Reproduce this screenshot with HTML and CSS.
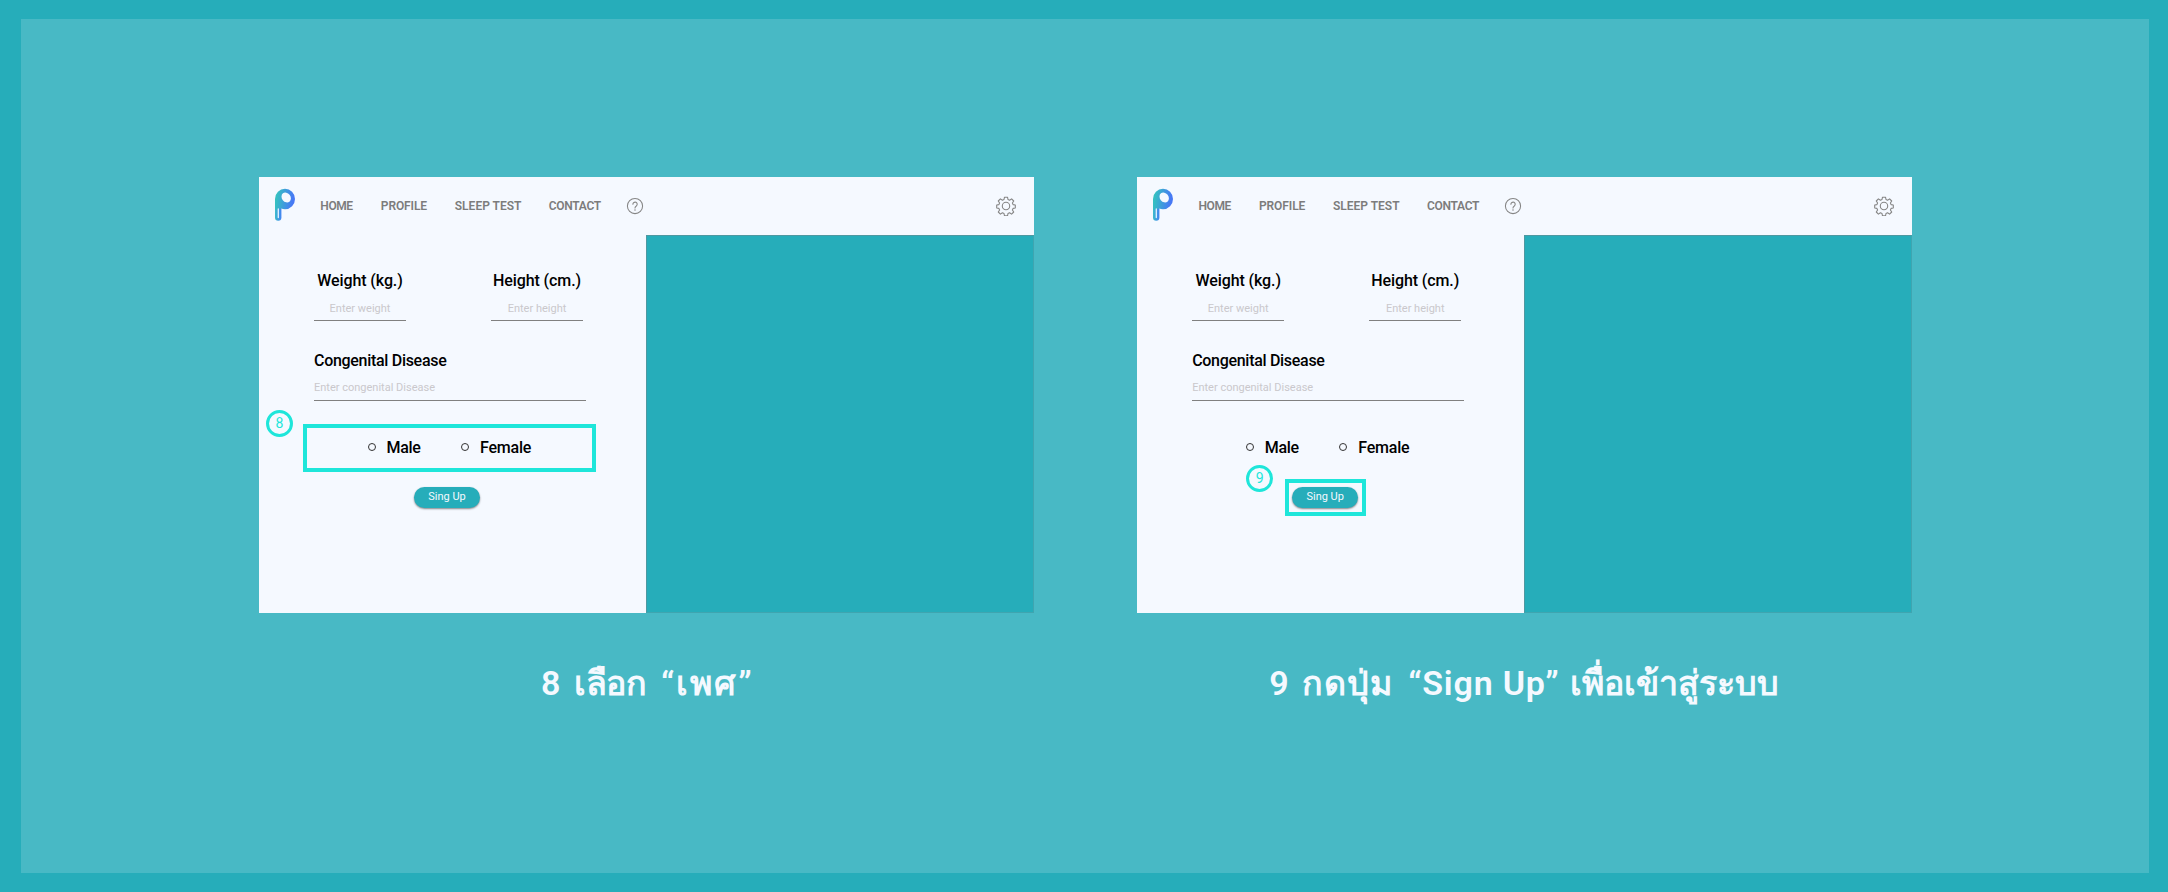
FILE: index.html
```html
<!DOCTYPE html>
<html lang="th">
<head>
<meta charset="utf-8">
<title>Sign up steps</title>
<link rel="stylesheet" href="styles.css">
</head>
<body>
<svg class="defs" width="0" height="0">
  <defs>
    <linearGradient id="brand" x1="0" y1="0.3" x2="1" y2="0.45">
      <stop offset="0.1" stop-color="#35bfc2"/><stop offset="0.9" stop-color="#4779f5"/>
    </linearGradient>
    <linearGradient id="stem" x1="0" y1="0" x2="1" y2="0">
      <stop offset="0" stop-color="#3bbccb"/><stop offset="1" stop-color="#4382f3"/>
    </linearGradient>
    <symbol id="logo" viewBox="0 0 22 34">
      <path d="M1 11.5V29.5a3.2 3.2 0 0 0 6.4 0V19.5" fill="url(#stem)"/>
      <path d="M1 11a10 10.300 0 1 1 10 10.300q-2.200 0-3.600-.8L1 22Z" fill="url(#brand)"/>
      <ellipse cx="12.200" cy="9.500" rx="4.300" ry="5.300" transform="rotate(-38 12.200 9.500)" fill="#f5f9ff"/>
      <path d="M4.300 21V29.500" stroke="#e4f3ff" stroke-width="1.300" stroke-linecap="round"/>
    </symbol>
    <symbol id="help" viewBox="0 0 18 18">
      <circle cx="9" cy="9" r="7.600" fill="none" stroke="#858585" stroke-width="1.050"/>
      <path d="M6.900 7.300a2.150 2.150 0 1 1 3.400 1.700C9.400 9.600 9 9.900 9 11" fill="none" stroke="#858585" stroke-width="1.100" stroke-linecap="round"/>
      <circle cx="9" cy="13" r=".75" fill="#858585"/>
    </symbol>
    <symbol id="gear" viewBox="0 0 20 20">
      <g fill="none" stroke="#858585" stroke-width="1.100" stroke-linejoin="round">
        <circle cx="10" cy="10" r="3.700"/>
        <path d="M8.500 1.200h3l.5 2.300 1.600.7 2-1.300 2.100 2.100-1.300 2 .7 1.600 2.200.4v3l-2.200.4-.7 1.600 1.300 2-2.100 2.100-2-1.300-1.600.7-.5 2.300h-3L8 17.500l-1.600-.7-2 1.300L2.300 16l1.300-2-.7-1.600L.7 12V9l2.200-.4.7-1.600-1.300-2 2.100-2.100 2 1.300L8 3.500Z"/>
      </g>
    </symbol>
  </defs>
</svg>
<main class="board">
  <figure class="step">
    <div class="screen">
      <header class="nav">
        <svg class="logo"><use href="#logo"/></svg>
        <nav class="links"><a class="home">HOME</a><a class="profile">PROFILE</a><a class="sleep">SLEEP TEST</a><a class="contact">CONTACT</a></nav>
        <svg class="help"><use href="#help"/></svg>
        <svg class="gear"><use href="#gear"/></svg>
      </header>
      <div class="body">
        <form class="form">
          <div class="pair">
            <div class="field center"><label class="weight">Weight (kg.)</label><span class="hint">Enter weight</span></div>
            <div class="field center"><label class="height">Height (cm.)</label><span class="hint">Enter height</span></div>
          </div>
          <div class="field wide"><label class="disease">Congenital Disease</label><span class="hint">Enter congenital Disease</span></div>
          <div class="sex"><i class="radio"></i><span class="male">Male</span><i class="radio"></i><span class="female">Female</span></div>
          <div class="submit">Sing Up</div>
        </form>
        <div class="cover"></div>
      </div>
      <div class="mark mark-sex"></div>
      <div class="badge badge-8">8</div>
    </div>
    <figcaption class="caption"><span class="num">8</span><span class="c-choose">เลือก</span><span class="c-sex">“เพศ”</span></figcaption>
  </figure>
  <figure class="step">
    <div class="screen">
      <header class="nav">
        <svg class="logo"><use href="#logo"/></svg>
        <nav class="links"><a class="home">HOME</a><a class="profile">PROFILE</a><a class="sleep">SLEEP TEST</a><a class="contact">CONTACT</a></nav>
        <svg class="help"><use href="#help"/></svg>
        <svg class="gear"><use href="#gear"/></svg>
      </header>
      <div class="body">
        <form class="form">
          <div class="pair">
            <div class="field center"><label class="weight">Weight (kg.)</label><span class="hint">Enter weight</span></div>
            <div class="field center"><label class="height">Height (cm.)</label><span class="hint">Enter height</span></div>
          </div>
          <div class="field wide"><label class="disease">Congenital Disease</label><span class="hint">Enter congenital Disease</span></div>
          <div class="sex"><i class="radio"></i><span class="male">Male</span><i class="radio"></i><span class="female">Female</span></div>
          <div class="submit">Sing Up</div>
        </form>
        <div class="cover"></div>
      </div>
      <div class="mark mark-submit"></div>
      <div class="badge badge-9">9</div>
    </div>
    <figcaption class="caption"><span class="num">9</span><span class="c-press">กดปุ่ม</span><span class="c-signup">“Sign Up”</span><span class="c-enter">เพื่อเข้าสู่ระบบ</span></figcaption>
  </figure>
</main>
</body>
</html>
```
FILE: styles.css
```css
* { box-sizing: border-box; }
body { margin: 0; height: 892px; padding: 19px 19px 19px 21px; background: #26adba; font-family: Roboto, "Noto Sans", sans-serif; overflow: hidden; }
.defs { position: absolute; }
.board { height: 854px; background: #48b9c5; display: flex; gap: 103.500px; padding: 158px 0 0 238px; }
.step { margin: 0; width: 774.700px; }
.screen { position: relative; height: 435.500px; background: #f5f9ff; display: flex; flex-direction: column; }
.nav { height: 58px; display: flex; align-items: center; padding: 0 18px 0 15px; flex: none; }
.logo { width: 22px; height: 34px; margin-top: -3px; }
.links { display: flex; margin-left: 24.300px; color: #7c7c7c; font-size: 12px; font-weight: 600; line-height: 16px; white-space: nowrap; }
.home { width: 60.500px; letter-spacing: -.4px; }
.profile { width: 74px; letter-spacing: -.1px; }
.sleep { width: 94px; letter-spacing: 0; }
.contact { width: 77.500px; letter-spacing: -.3px; }
.help { width: 18px; height: 18px; }
.gear { width: 20px; height: 20px; margin-left: auto; }
.body { display: flex; flex: 1; }
.form { width: 387px; padding: 36px 0 0 55px; white-space: nowrap; }
.cover { flex: 1; background: #26adba; border: 1px solid #4e98a1; border-right-color: #3fa5b0; border-bottom-color: #3fa5b0; }
.pair { display: flex; gap: 85px; }
.field { display: flex; flex-direction: column; width: 92px; border-bottom: 1px solid #808080; padding-bottom: 3px; }
.center { align-items: center; }
.wide { width: 272px; margin-top: 30px; padding-bottom: 3px; }
label { font-size: 16px; line-height: 20px; font-weight: 500; color: #000; }
.weight, .height { letter-spacing: -.1px; }
.disease { letter-spacing: -.3px; }
.hint { margin-top: 10px; font-size: 11px; line-height: 16px; color: #cac8cc; }
.wide .hint { margin-top: 9px; padding-bottom: 1px; }
.sex { display: flex; align-items: center; margin-top: 36px; height: 20px; font-size: 16px; font-weight: 500; padding-left: 53.500px; }
.radio { width: 8px; height: 8px; border: 1px solid #333; border-radius: 50%; }
.male { width: 74.500px; margin-left: 11px; letter-spacing: -.3px; }
.female { margin-left: 11px; letter-spacing: -.2px; }
.submit { margin: 30px 0 0 100px; width: 66px; height: 21px; border-radius: 11px; background: #26adba; box-shadow: 0 1px 2px #0007; color: #f5f9ff; text-align: center; font-size: 11px; line-height: 20px; }
.mark { position: absolute; border: 4px solid #1ee6da; }
.mark-sex { left: 44px; top: 247px; width: 293px; height: 48px; }
.mark-submit { left: 147.500px; top: 302px; width: 81px; height: 37px; }
.badge { position: absolute; width: 27px; height: 27px; border: 3px solid #1ee6da; border-radius: 50%; color: #1ee6da; text-align: center; font-size: 14px; line-height: 21px; }
.badge-8 { left: 7px; top: 233px; }
.badge-9 { left: 109px; top: 288px; }
.caption { display: flex; margin-top: 48.500px; height: 44px; font-size: 34px; line-height: 44px; color: #f5f9ff; font-weight: 600; white-space: nowrap; }
.step:first-child .caption { padding-left: 282px; }
.step:last-child .caption { padding-left: 132px; }
.num { width: 33px; }
.c-choose { width: 87px; letter-spacing: -.4px; }
.c-sex { letter-spacing: 2px; }
.c-press { width: 106px; letter-spacing: .8px; }
.c-signup { width: 162px; letter-spacing: .8px; }
```
